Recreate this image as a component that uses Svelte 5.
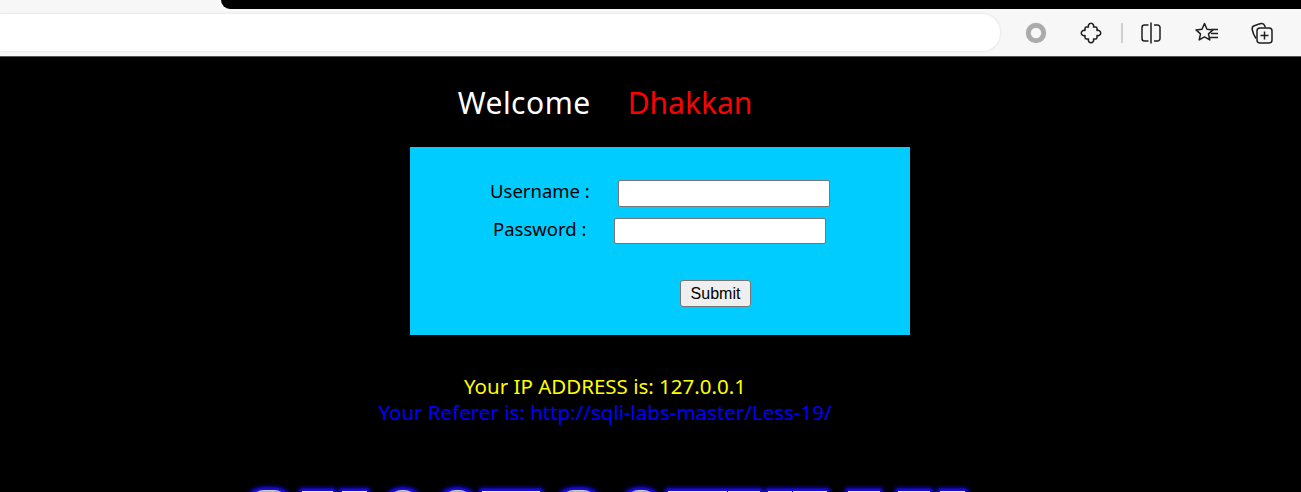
<script>
  const rounds = [[245,48],[383,40],[437,41],[555,47],[620,42]];
  const flats = [[302,31],[342,25],[482,58],[668,59],[728,32],[768,24],[793,34],[848,32],[898,32],[940,25]];
</script>

<div class="page">
  <header class="chrome">
    <div class="tabstrip"><div class="tabfill"></div><div class="tabblack"></div></div>
    <div class="toolbar">
      <div class="address"></div>
      <div class="tools">
        <svg class="ic rec" width="24" height="24" viewBox="0 0 24 24"><circle cx="12" cy="12" r="7.700" fill="none" stroke="#ababab" stroke-width="5"/></svg>
        <svg class="ic ext" width="24" height="24" viewBox="0 0 24 24"><path d="M9.500 6A2.700 2.700 0 1 1 14.500 6H16.500c1 0 1.500.5 1.500 1.500v2A2.700 2.700 0 1 1 18 14.500v2c0 1-.5 1.500-1.500 1.500h-2A2.700 2.700 0 1 1 9.500 18h-2c-1 0-1.500-.5-1.500-1.500v-2A2.700 2.700 0 1 1 6 9.500v-2C6 6.500 6.500 6 7.500 6z" fill="none" stroke="#1f1f1f" stroke-width="1.500" stroke-linejoin="round"/></svg>
        <span class="divider"></span>
        <svg class="ic split" width="24" height="24" viewBox="0 0 24 24"><path d="M9.500 4H5.500A2.500 2.500 0 0 0 3 6.500v11A2.500 2.500 0 0 0 5.500 20h4M15 4h3.500A2.500 2.500 0 0 1 21 6.500v11a2.500 2.500 0 0 1-2.500 2.500H15M12 1.500v21" fill="none" stroke="#1f1f1f" stroke-width="1.500"/></svg>
        <svg class="ic fav" width="24" height="24" viewBox="0 0 24 24"><path d="M9.500 2.500l2.500 5.800 6 .6-4.500 4 1.300 6-5.300-3-5.300 3 1.300-6L1 8.900l6-.6z" fill="none" stroke="#1f1f1f" stroke-width="1.500" stroke-linejoin="round"/><path d="M16 8.500h7M16 12.500h7M15 16.500h8" stroke="#1f1f1f" stroke-width="1.300" fill="none"/></svg>
        <svg class="ic coll" width="24" height="24" viewBox="0 0 24 24"><path d="M6 17.500c-1.700-2.500-3.300-6.300-3.800-9-.3-1.700.3-3 1.900-3.700 2.300-.9 4.800-1.900 7-2.300 1.500-.3 2.900.4 3.500 2l.8 2" fill="none" stroke="#1f1f1f" stroke-width="1.500"/><rect x="7" y="7" width="15" height="15" rx="3" fill="none" stroke="#1f1f1f" stroke-width="1.500"/><path d="M14.500 10.500v8M10.500 14.500h8" stroke="#1f1f1f" stroke-width="1.500" fill="none"/></svg>
      </div>
    </div>
  </header>

  <main class="content">
    <div class="welcome"><span class="hello">Welcome</span><span class="name">Dhakkan</span></div>

    <form class="box" onsubmit={(e) => e.preventDefault()}>
      <div class="row user">
        <label for="u">Username :</label>
        <input id="u" type="text" />
      </div>
      <div class="row pass">
        <label for="p">Password :</label>
        <input id="p" type="password" />
      </div>
      <div class="actions"><button type="submit">Submit</button></div>
    </form>

    <div class="info">
      <div class="ip">Your IP ADDRESS is: 127.0.0.1</div>
      <div class="ref">Your Referer is: http://sqli-labs-master/Less-19/</div>
    </div>

    <svg class="banner" width="1301" height="30" viewBox="0 0 1301 30">
      <defs>
        <filter id="glow" x="-30%" y="-100%" width="160%" height="300%"><feGaussianBlur stdDeviation="2.200"/></filter>
        <linearGradient id="silver" x1="0" y1="0" x2="0" y2="1"><stop offset="0" stop-color="#d8d8dc"/><stop offset="0.1" stop-color="#8f8f9a"/></linearGradient>
      </defs>
      <g filter="url(#glow)" fill="#1c08ff">
        {#each rounds as [x, w]}<rect x={x - 1} y="12" width={w + 2} height="40" rx="20"/>{/each}
        {#each flats as [x, w]}<rect x={x - 3} y="13" width={w + 6} height="40" rx="2"/>{/each}
        {#each rounds as [x, w]}<rect x={x - 1} y="12" width={w + 2} height="40" rx="20"/>{/each}
        {#each flats as [x, w]}<rect x={x - 3} y="13" width={w + 6} height="40" rx="2"/>{/each}
      </g>
      {#each rounds as [x, w]}<rect x={x + 4} y="15" width={w - 8} height="30" rx="15" fill="url(#silver)"/>{/each}
      {#each flats as [x, w]}<rect {x} y="16" width={w} height="30" fill="#ececf4"/>{/each}
    </svg>
  </main>
</div>

<style>
  :global(body) { margin: 0; background: #000; }
  .page {
    width: 1301px;
    height: 492px;
    overflow: hidden;
    background: #000;
    font-family: "Noto Sans", "Open Sans", sans-serif;
  }
  .chrome { height: 57px; display: flex; flex-direction: column; }
  .tabstrip { height: 9px; flex: none; display: flex; background: #f7f7f7; }
  .tabfill { width: 221px; }
  .tabblack { flex: 1; background: #000; border-bottom-left-radius: 9px; }
  .toolbar {
    flex: 1;
    display: flex;
    background: #f7f7f7;
    border-bottom: 1px solid #555;
    box-sizing: border-box;
    padding: 5px 0;
    min-height: 0;
  }
  .address {
    width: 1000px;
    height: 37px;
    background: #fff;
    border-radius: 0 18px 18px 0;
    box-shadow: 0 0 3px rgba(0, 0, 0, 0.12);
  }
  .tools { display: flex; align-items: center; margin-left: 24px; height: 38px; }
  .ic { display: block; flex: none; }
  .ext { margin-left: 31px; }
  .divider { width: 2px; height: 20px; background: #cfcfcf; margin-left: 18px; }
  .split { margin-left: 16px; }
  .fav { margin-left: 32px; }
  .coll { margin-left: 31px; }

  .content { display: flex; flex-direction: column; }
  .welcome {
    width: 1210px;
    display: flex;
    justify-content: center;
    gap: 37px;
    margin-top: 25px;
    height: 42px;
    font-size: 30px;
    line-height: 42px;
    color: #fff;
  }
  .hello { letter-spacing: 0.5px; }
  .name { color: #f00; }
  .box {
    width: 500px;
    height: 188px;
    margin: 23px 0 0 410px;
    background: #00ccff;
    box-sizing: border-box;
    padding-top: 33px;
    font-size: 18.500px;
    color: #000;
    display: flex;
    flex-direction: column;
  }
  .row { display: flex; align-items: flex-start; }
  label { line-height: 21px; }
  .user { height: 27px; padding-left: 80px; gap: 28px; }
  .pass { height: 26px; margin-top: 11px; padding-left: 83px; gap: 28px; }
  input {
    box-sizing: border-box;
    width: 212px;
    height: 100%;
    margin: 0;
    padding: 1px 2px;
    background: #fff;
    border: 1px solid #767676;
    border-radius: 2px;
  }
  .actions { padding-left: 270px; margin-top: 36px; }
  button {
    box-sizing: border-box;
    display: block;
    width: 71px;
    height: 27px;
    padding: 0;
    background: #efefef;
    border: 1px solid #767676;
    border-radius: 3px;
    color: #000;
    font: 16px "Liberation Sans", Arial, sans-serif;
  }
  .info {
    width: 1210px;
    margin-top: 38px;
    text-align: center;
    font-size: 20.500px;
    line-height: 26px;
  }
  .ip { color: #ff0; }
  .ref { color: #0000ff; }
  .banner { display: block; margin-top: 50px; flex: none; }
</style>
